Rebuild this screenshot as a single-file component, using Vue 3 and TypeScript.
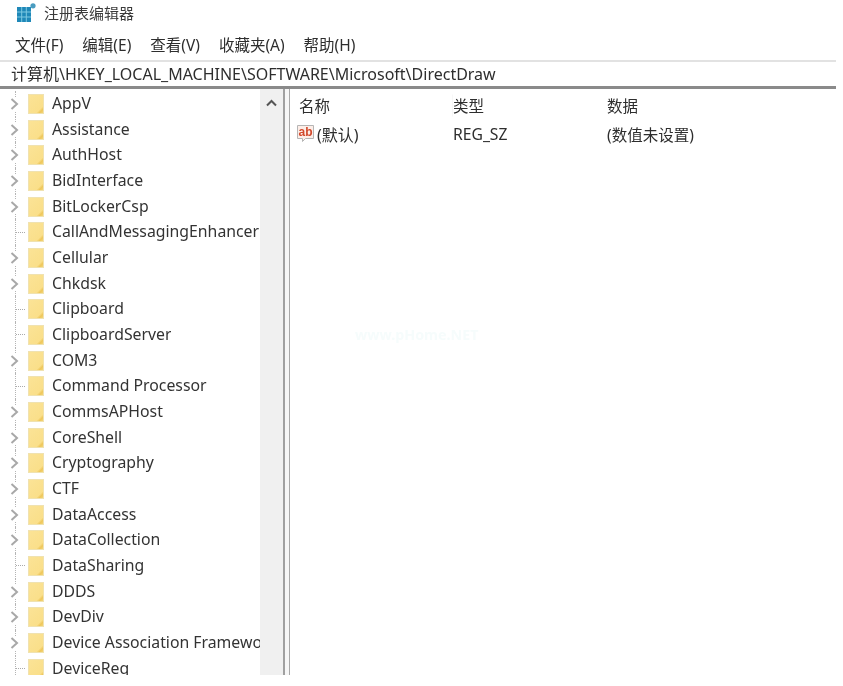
<script setup lang="ts">
interface Key { name: string; leaf?: boolean }
const keys: Key[] = [
  { name: 'AppV' }, { name: 'Assistance' }, { name: 'AuthHost' }, { name: 'BidInterface' },
  { name: 'BitLockerCsp' }, { name: 'CallAndMessagingEnhancer', leaf: true }, { name: 'Cellular' },
  { name: 'Chkdsk' }, { name: 'Clipboard', leaf: true }, { name: 'ClipboardServer', leaf: true },
  { name: 'COM3' }, { name: 'Command Processor', leaf: true }, { name: 'CommsAPHost' },
  { name: 'CoreShell' }, { name: 'Cryptography' }, { name: 'CTF' }, { name: 'DataAccess' },
  { name: 'DataCollection' }, { name: 'DataSharing', leaf: true }, { name: 'DDDS' },
  { name: 'DevDiv' }, { name: 'Device Association Framework' }, { name: 'DeviceReq', leaf: true },
]
const menus = ['文件(F)', '编辑(E)', '查看(V)', '收藏夹(A)', '帮助(H)']
</script>

<template>
  <div class="app">
    <header class="title">
      <svg class="logo" width="22" height="20" viewBox="0 0 22 20">
        <rect x="2" y="4" width="14" height="15" fill="#1f88b8" />
        <path d="M6.700 4v15M11.300 4v15M2 9h14M2 14h14" stroke="#7cc8e2" stroke-width="1" />
        <circle cx="18" cy="2.800" r="2.600" fill="#4a9cc0" />
      </svg>
      <span>注册表编辑器</span>
    </header>
    <nav class="menu">
      <span v-for="m in menus" :key="m">{{ m }}</span>
    </nav>
    <div class="address">计算机\HKEY_LOCAL_MACHINE\SOFTWARE\Microsoft\DirectDraw</div>
    <main class="panes">
      <section class="tree">
        <div class="rows">
          <div v-for="k in keys" :key="k.name" class="row">
            <span class="twist">
              <span v-if="k.leaf" class="dots"></span>
              <svg v-else width="9" height="14" viewBox="0 0 9 14">
                <path d="M1.500 2 7 7l-5.500 5" fill="none" stroke="#a8a8a8" stroke-width="2" />
              </svg>
            </span>
            <span class="folder"></span>
            <span class="name">{{ k.name }}</span>
          </div>
        </div>
        <div class="scroll">
          <svg width="13" height="8" viewBox="0 0 13 8">
            <path d="M2 6.500 6.500 2 11 6.500" fill="none" stroke="#555" stroke-width="2" />
          </svg>
        </div>
      </section>
      <div class="divider"></div>
      <section class="list">
        <div class="head">
          <span class="c1">名称</span>
          <span class="c2 sep">类型</span>
          <span>数据</span>
        </div>
        <div class="item">
          <span class="c1 value">
            <svg width="20" height="20" viewBox="0 0 20 20">
              <path d="M1.500 1.500h16v13h-8l-3 3v-3h-5z" fill="#fdeee8" stroke="#b5b5b5" />
              <text x="9.500" y="12" text-anchor="middle" class="ab">ab</text>
            </svg>
            <span class="default">(默认)</span>
          </span>
          <span class="c2 type">REG_SZ</span>
          <span>(数值未设置)</span>
        </div>
        <div class="mark">www.pHome.NET</div>
      </section>
    </main>
  </div>
</template>

<style scoped>
.app {
  width: 843px;
  height: 686px;
  overflow: hidden;
  background: #fff;
  color: #2e2e2e;
  font-family: "Noto Sans", "Noto Sans CJK SC", sans-serif;
  display: flex;
  flex-direction: column;
  filter: blur(0.45px);
}
.title {
  height: 26px;
  padding: 0 0 2px 15px;
  box-sizing: border-box;
  display: flex;
  align-items: center;
  gap: 7px;
  font-size: 15px;
  color: #3a3a3a;
}
.logo { flex: none; margin-top: 2px; }
.menu {
  height: 34px;
  padding: 2px 0 0 15px;
  box-sizing: border-box;
  display: flex;
  align-items: center;
  gap: 19px;
  font-size: 15.500px;
}
.address {
  width: 836px;
  height: 29px;
  box-sizing: border-box;
  border-top: 2px solid #e2e2e2;
  border-bottom: 3px solid #8a8a8a;
  padding-left: 11px;
  font-size: 16px;
  line-height: 25px;
  white-space: nowrap;
}
.panes {
  width: 836px;
  height: 586px;
  display: flex;
  overflow: hidden;
}
.tree {
  width: 283px;
  flex: none;
  display: flex;
  overflow: hidden;
}
.rows {
  width: 260px;
  height: 586px;
  flex: none;
  overflow: hidden;
  padding-top: 2px;
  box-sizing: border-box;
}
.row {
  position: relative;
  height: 25.680px;
  display: flex;
  align-items: center;
  padding-left: 10px;
  white-space: nowrap;
  font-size: 15.800px;
  color: #333;
}
.row::before {
  content: "";
  position: absolute;
  left: 15px;
  top: 0;
  bottom: 0;
  border-left: 1px dotted #b5b5b5;
}
.twist {
  position: relative;
  width: 18px;
  flex: none;
  display: flex;
  align-items: center;
}
.twist svg {
  display: block;
  background: #fff;
}
.dots {
  width: 9px;
  margin-left: 6px;
  border-top: 1px dotted #aaa;
}
.folder {
  width: 16px;
  height: 20px;
  flex: none;
  margin-right: 8px;
  box-sizing: border-box;
  border: 1px solid #f0e2b0;
  background: linear-gradient(135deg, #fbe396 0%, #fadf8a 78%, #eec75c 88%, #f5d678 100%);
}
.name {
  overflow: hidden;
  line-height: 24px;
  margin-top: -2px;
}
.scroll {
  flex: 1;
  background: #f0f0f0;
  display: flex;
  justify-content: center;
  padding-top: 10px;
  box-sizing: border-box;
}
.scroll svg { display: block; }
.divider {
  width: 7px;
  flex: none;
  box-sizing: border-box;
  border-left: 2px solid #a0a0a0;
  border-right: 1px solid #a8a8a8;
  background: #f6f6f6;
}
.list {
  flex: 1;
  position: relative;
  font-size: 15.500px;
}
.head, .item {
  display: flex;
  align-items: center;
  padding-left: 9px;
}
.head { height: 32px; }
.item { height: 26px; }
.c1 { width: 154px; flex: none; }
.c2 { width: 154px; flex: none; }
.sep { box-shadow: -1px 0 0 -0.500px #eee; }
.value { display: flex; align-items: center; margin-left: -3px; width: 157px; }
.default { font-size: 16px; margin-left: 1px; }
.type { font-size: 15.700px; }
.ab {
  font-size: 12px;
  font-weight: 700;
  fill: #d2492c;
  font-family: "Liberation Sans", sans-serif;
}
.mark {
  position: absolute;
  left: 65px;
  top: 236px;
  font-size: 14.300px;
  font-weight: 700;
  color: #f6fcfc;
}
</style>
